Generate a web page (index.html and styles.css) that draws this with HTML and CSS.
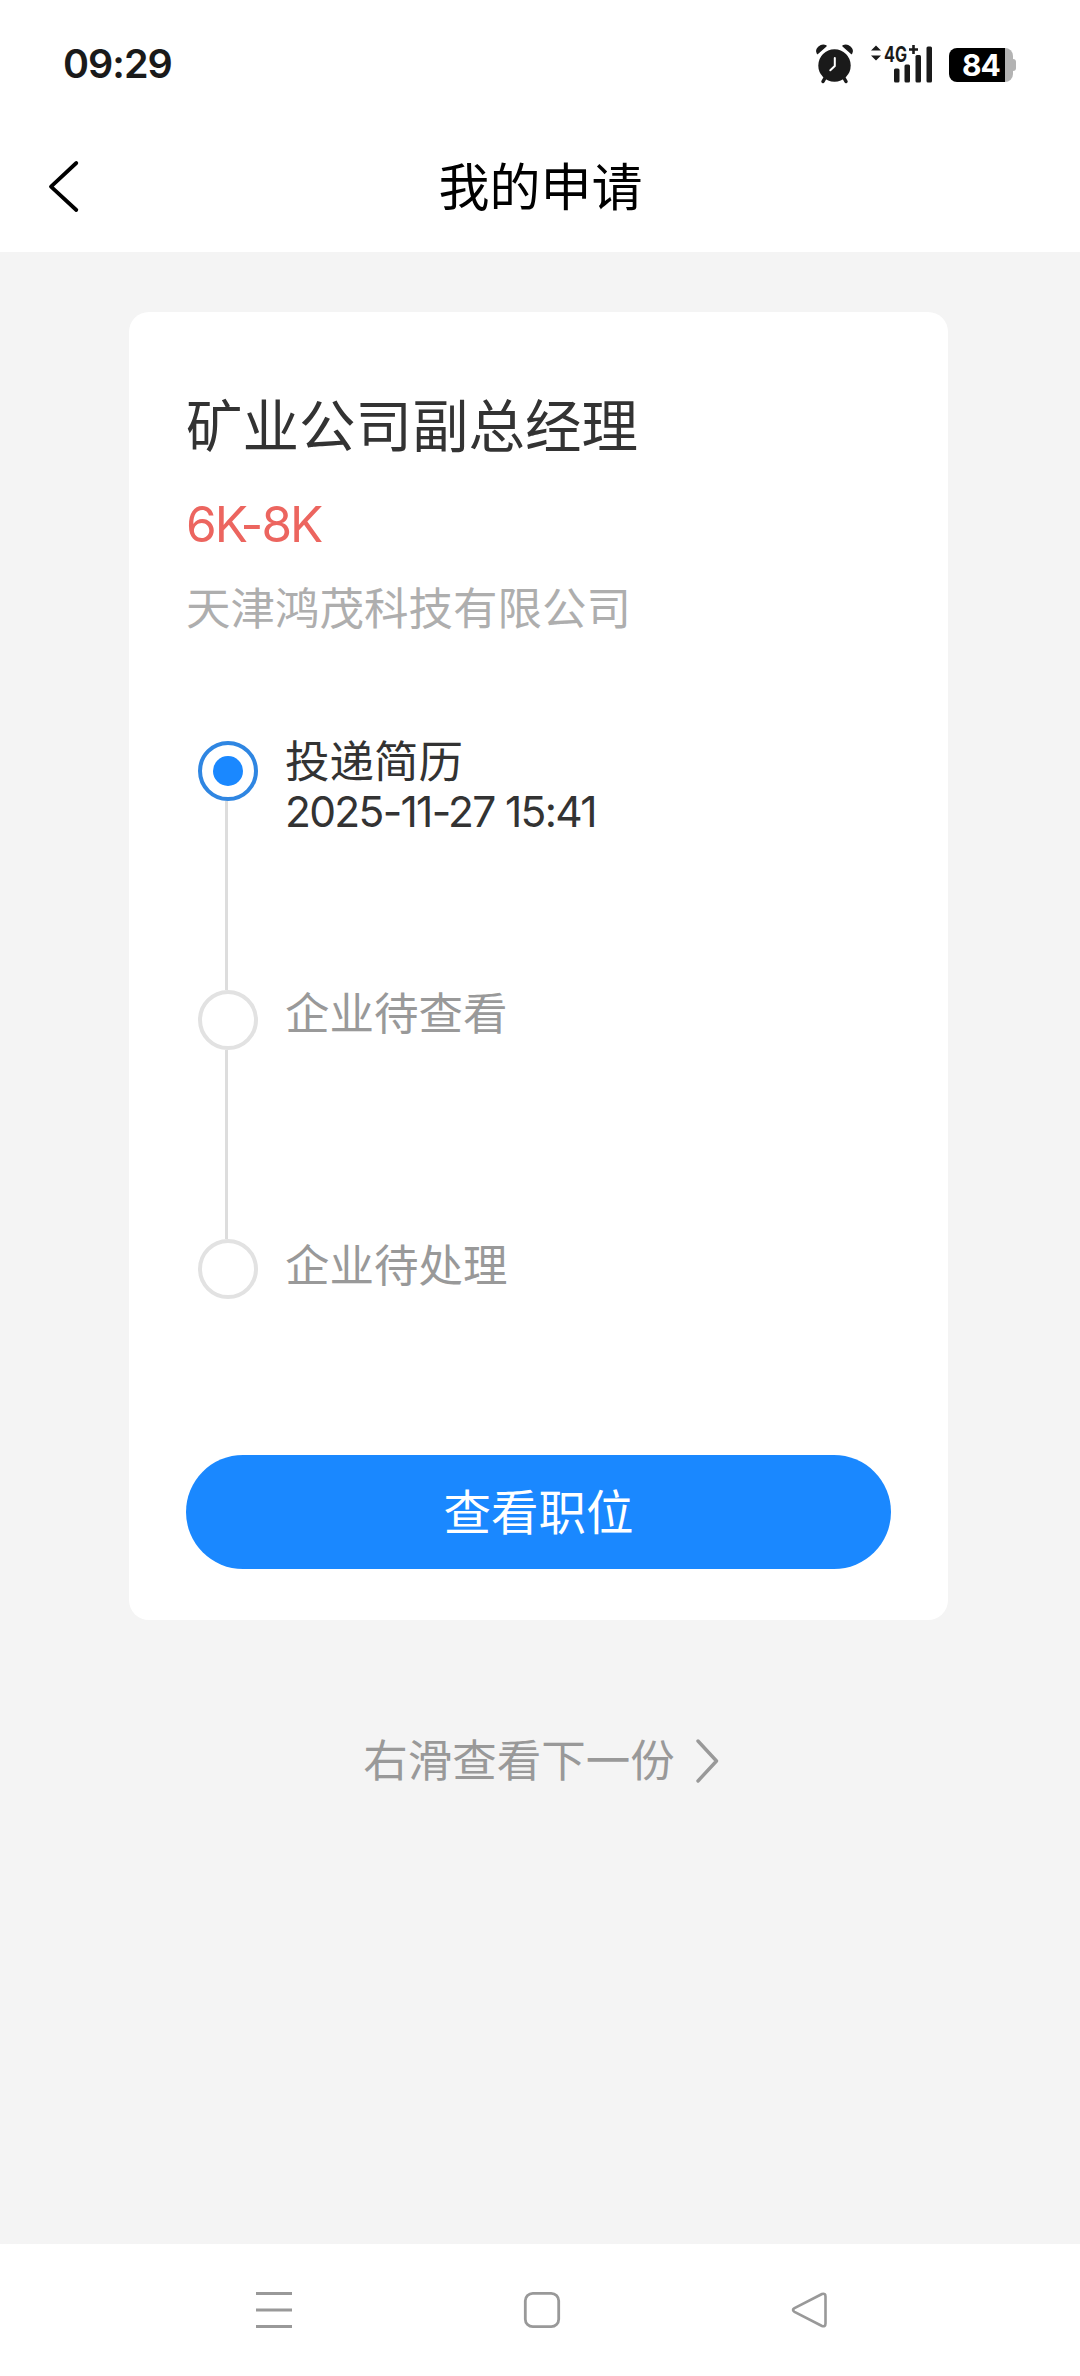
FILE: index.html
```html
<!DOCTYPE html>
<html lang="zh-CN">
<head>
    <meta charset="UTF-8">
    <meta name="viewport" content="width=device-width, initial-scale=1.0">
    <title>我的申请</title>
    <link rel="stylesheet" href="styles.css">
</head>
<body>

    <div class="status-bar">
        <span class="time">09:29</span>
        <div class="status-icons">
            <svg class="alarm" width="38" height="40" viewBox="0 0 38 40">
                <circle cx="18.500" cy="21.500" r="16.200" fill="#1a1a1a"/>
                <path d="M1.500 9.500C-1 5 5-.5 10 2zM35.500 9.500C38 5 32 -.5 27 2z" fill="#1a1a1a" stroke="#1a1a1a" stroke-width="1.500" stroke-linejoin="round"/>
                <path d="M9 34l-2 3.500M28 34l2 3.500" stroke="#1a1a1a" stroke-width="3.500" stroke-linecap="round"/>
                <path d="M18.800 14v8l-4.500 4.300" fill="none" stroke="#fff" stroke-width="2" stroke-linecap="round" stroke-linejoin="round"/>
            </svg>
            <svg class="signal" width="64" height="40" viewBox="0 0 64 40">
                <path d="M1 6.500L6 1.500l5 5zM1 11.500l5 5 5-5z" fill="#1a1a1a"/>
                <text class="network" x="14" y="17.500" textLength="23" lengthAdjust="spacingAndGlyphs">4G</text>
                <path d="M39 5.500h9M43.500 1v9" stroke="#1a1a1a" stroke-width="2.600"/>
                <g fill="#1a1a1a">
                    <rect x="24" y="24.500" width="5.500" height="14" rx="1.500"/>
                    <rect x="34.500" y="20.500" width="5.500" height="18" rx="1.500"/>
                    <rect x="45.500" y="11" width="5.500" height="27.500" rx="1.500"/>
                    <rect x="56.500" y="2.500" width="5.500" height="36" rx="1.500"/>
                </g>
            </svg>
            <div class="battery">
                <span class="battery-level">84</span>
            </div>
        </div>
    </div>

    <header class="navbar">
        <svg class="back" width="32" height="54" viewBox="0 0 32 54">
            <path d="M28.300 4L3 27.600 28.300 51" fill="none" stroke="#000" stroke-width="3.800" stroke-linecap="round" stroke-linejoin="round"/>
        </svg>
        <h1>我的申请</h1>
    </header>

    <main>
        <section class="card">
            <h2 class="job-title">矿业公司副总经理</h2>
            <p class="salary">6K-8K</p>
            <p class="company">天津鸿茂科技有限公司</p>

            <div class="progress">
                <div class="track">
                    <span class="dot active"></span>
                    <span class="line"></span>
                    <span class="dot"></span>
                    <span class="line"></span>
                    <span class="dot"></span>
                </div>
                <ul class="steps">
                    <li class="done">投递简历<span class="date">2025-11-27 15:41</span></li>
                    <li>企业待查看</li>
                    <li>企业待处理</li>
                </ul>
            </div>

            <button class="view-btn" type="button">查看职位</button>
        </section>

        <p class="hint">
            <span>右滑查看下一份</span>
            <svg class="chevron" width="24" height="46" viewBox="0 0 24 46">
                <path d="M3 3l18.500 20L3 43" fill="none" stroke="#999" stroke-width="3.400" stroke-linecap="round" stroke-linejoin="round"/>
            </svg>
        </p>
    </main>

    <nav class="system-nav">
        <svg width="38" height="38" viewBox="0 0 38 38">
            <path d="M1 2.500h36M1 19h36M1 35.500h36" stroke="#999" stroke-width="3"/>
        </svg>
        <svg width="38" height="38" viewBox="0 0 38 38">
            <rect x="2.300" y="2.300" width="33.400" height="33.400" rx="7.500" fill="none" stroke="#999" stroke-width="2.800"/>
        </svg>
        <svg width="38" height="38" viewBox="0 0 38 38">
            <path d="M31 3L3.500 17.200q-3 1.800 0 3.600L31 35q3.500 1 3.500-2.500v-27q0-3.500-3.500-2.500z" fill="none" stroke="#999" stroke-width="2.600" stroke-linejoin="round"/>
        </svg>
    </nav>

</body>
</html>
```
FILE: styles.css
```css
/* Global Styles */
* {
    box-sizing: border-box;
    margin: 0;
    padding: 0;
}

body {
    display: flex;
    flex-direction: column;
    width: 1080px;
    height: 2376px;
    background-color: #f4f4f4;
    color: #333;
    font-family: "Noto Sans CJK SC", sans-serif;
}

svg {
    display: block;
    flex-shrink: 0;
    overflow: visible;
}

/* Status Bar */
.status-bar {
    display: flex;
    justify-content: space-between;
    align-items: center;
    height: 128px;
    padding: 0 67px 0 63px;
    background-color: #fff;
}

.time {
    font-family: Inter, sans-serif;
    font-size: 39.5px;
    font-weight: 600;
    line-height: 48px;
    letter-spacing: -1px;
    color: #1a1a1a;
}

.status-icons {
    display: flex;
    align-items: center;
}

.signal {
    margin-left: 16px;
}

.network {
    font-family: Inter, sans-serif;
    font-size: 21px;
    font-weight: 700;
    fill: #1a1a1a;
}

.battery {
    position: relative;
    width: 64px;
    height: 34px;
    margin-top: 2px;
    margin-left: 15px;
    border-radius: 8px;
    background: linear-gradient(to right, #000 56px, #b3b3b3 56px);
}

.battery::after {
    content: "";
    position: absolute;
    right: -3px;
    top: 11px;
    width: 4px;
    height: 12px;
    border-radius: 0 3px 3px 0;
    background-color: #b3b3b3;
}

.battery-level {
    display: block;
    font-family: Inter, sans-serif;
    font-size: 30px;
    font-weight: 700;
    line-height: 35px;
    letter-spacing: -1px;
    text-align: center;
    color: #fff;
}

/* Page Header */
.navbar {
    display: flex;
    align-items: center;
    height: 124px;
    padding: 0 79px 8px 48px;
    background-color: #fff;
}

.navbar h1 {
    flex: 1;
    padding-bottom: 4px;
    font-size: 51px;
    font-weight: 400;
    line-height: 60px;
    text-align: center;
    color: #000;
}

/* Application Card */
main {
    flex: 1;
    padding: 60px 132px 0 129px;
}

.card {
    height: 1308px;
    padding: 78px 57px 0;
    border-radius: 20px;
    background-color: #fff;
}

.job-title {
    font-size: 56.5px;
    font-weight: 400;
    line-height: 64px;
}

.salary {
    margin-top: 40px;
    font-family: Inter, sans-serif;
    font-size: 49.5px;
    line-height: 60px;
    letter-spacing: -2px;
    color: #ec655f;
}

.company {
    margin-top: 26px;
    font-size: 44.5px;
    line-height: 51px;
    color: #aeaeae;
}

/* Progress Steps */
.progress {
    display: flex;
    margin-top: 101px;
    padding-left: 12px;
}

.track {
    display: flex;
    flex-direction: column;
    width: 60px;
    padding-top: 9px;
}

.dot {
    display: flex;
    width: 60px;
    height: 60px;
    border: 4px solid #e2e2e2;
    border-radius: 50%;
}

.dot.active {
    border-color: #2f86e2;
}

.dot.active::after {
    content: "";
    width: 30px;
    height: 30px;
    margin: auto;
    border-radius: 50%;
    background-color: #1a88ff;
}

.line {
    width: 3px;
    height: 189px;
    margin-left: 27px;
    background-color: #ddd;
}

.steps {
    padding-left: 27px;
    list-style: none;
}

.steps li {
    height: 252px;
    font-size: 44.5px;
    line-height: 53px;
    color: #999;
}

.steps li:last-child {
    height: 53px;
}

.steps .done {
    color: #333;
}

.date {
    display: block;
    font-family: Inter, sans-serif;
    font-size: 42.5px;
    letter-spacing: -1.7px;
}

.view-btn {
    display: block;
    width: 705px;
    height: 114px;
    margin-top: 156px;
    padding-bottom: 5px;
    border: none;
    border-radius: 57px;
    background-color: #1a88ff;
    font-family: inherit;
    font-size: 47.5px;
    color: #fff;
}

/* Swipe Hint */
.hint {
    display: flex;
    justify-content: center;
    align-items: center;
    gap: 20px;
    margin-top: 111px;
    padding-left: 5px;
    font-size: 44.5px;
    line-height: 54px;
    color: #999;
}

.chevron {
    margin-top: 5px;
}

/* System Navigation */
.system-nav {
    display: flex;
    align-items: center;
    gap: 230px;
    height: 132px;
    padding-left: 255px;
    background-color: #fff;
}
```
